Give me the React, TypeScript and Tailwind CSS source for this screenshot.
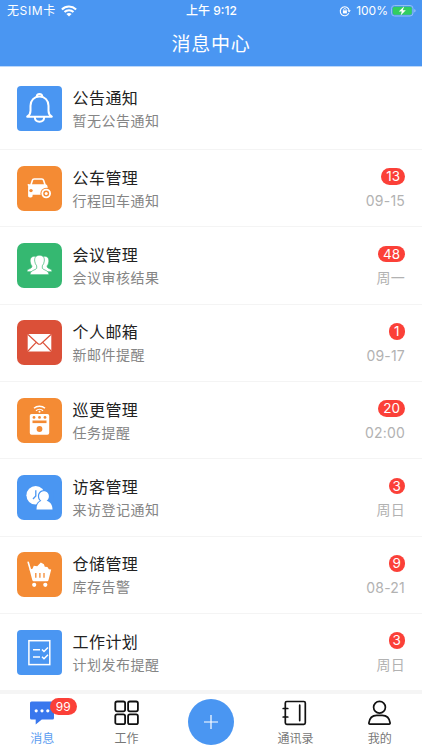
import { ReactNode } from 'react'

type IconName = 'bell' | 'car' | 'people' | 'mail' | 'patrol' | 'visitor' | 'cart' | 'plan'

interface Message {
  title: string
  subtitle: string
  icon: IconName
  color: string
  badge?: string
  time?: string
}

const MESSAGES: Message[] = [
  { title: '公告通知', subtitle: '暂无公告通知', icon: 'bell', color: 'bg-[#4a96f2] rounded-[4px]' },
  { title: '公车管理', subtitle: '行程回车通知', icon: 'car', color: 'bg-[#f48b34] rounded-[7px]', badge: '13', time: '09-15' },
  { title: '会议管理', subtitle: '会议审核结果', icon: 'people', color: 'bg-[#35b871] rounded-[7px]', badge: '48', time: '周一' },
  { title: '个人邮箱', subtitle: '新邮件提醒', icon: 'mail', color: 'bg-[#db5038] rounded-[7px]', badge: '1', time: '09-17' },
  { title: '巡更管理', subtitle: '任务提醒', icon: 'patrol', color: 'bg-[#f48b34] rounded-[7px]', badge: '20', time: '02:00' },
  { title: '访客管理', subtitle: '来访登记通知', icon: 'visitor', color: 'bg-[#4a96f2] rounded-[7px]', badge: '3', time: '周日' },
  { title: '仓储管理', subtitle: '库存告警', icon: 'cart', color: 'bg-[#f48b34] rounded-[7px]', badge: '9', time: '08-21' },
  { title: '工作计划', subtitle: '计划发布提醒', icon: 'plan', color: 'bg-[#4a96f2] rounded-[4px]', badge: '3', time: '周日' },
]

// Every glyph is drawn on the 45px tile
const GLYPHS: Record<IconName, ReactNode> = {
  bell: (
    <g fill="none" stroke="#fff" strokeWidth="2" strokeLinejoin="round" strokeLinecap="round">
      <path d="M10.2 30.7c2.4-1.6 3.3-3.4 3.3-6v-5c0-5.2 3.7-9.2 9-9.2s9 4 9 9.2v5c0 2.6.9 4.4 3.3 6z" />
      <path d="M19.8 10.6c0-3.4 5.4-3.4 5.4 0" />
      <path d="M17.8 31.2c.3 6 9.1 6 9.4 0" />
    </g>
  ),
  car: (
    <g>
      <path
        d="M13.3 18.3l1.3-4c.4-1.3 1.2-2 2.7-2h7.4c1.5 0 2.3.7 2.7 2l1.3 4c1.3.5 1.9 1.5 1.9 2.9v7.6h-15v1c0 1.2-.7 1.7-1.7 1.7h-1c-1.2 0-1.8-.5-1.8-1.7v-7.6c0-1.6.2-2.4-.2-2.7-.7-.6-.3-1.5.6-1.4.6 0 1.1.4 1.8.2z"
        fill="#fff"
      />
      <path d="M15 18.3l1.1-3.5c.2-.8.7-1.1 1.5-1.1h6.8c.8 0 1.3.3 1.5 1.1l1.1 3.5z" fill="#f48b34" />
      <circle cx="14" cy="24.6" r="1.7" fill="#f48b34" />
      <circle cx="29.2" cy="27.5" r="5.8" fill="#f48b34" />
      <circle cx="29.2" cy="27.5" r="3.9" fill="none" stroke="#fff" strokeWidth="1.8" />
      <circle cx="29.2" cy="27.5" r="1.5" fill="#fff" />
    </g>
  ),
  people: (
    <g fill="#fff" stroke="#35b871" strokeWidth=".7">
      <path d="M17.6 13.3c-3.6 0-4.7 2.3-4.4 5.6.2 1.8.8 3 1.7 4 .2 1.5-.9 2.2-2.5 2.9-1.7.7-2.4 1.2-2.4 3h14V15z" />
      <path d="M27.4 13.3c3.6 0 4.7 2.3 4.4 5.6-.2 1.8-.8 3-1.7 4-.2 1.5.9 2.2 2.5 2.9 1.7.7 2.4 1.2 2.4 3h-14V15z" />
      <path d="M22.5 12.3c-3.7 0-5.2 2.3-4.8 5.8.2 2 1 3.6 2 4.7v2.5c-1.6 2.1-6.6 1.9-6.6 6.4h18.8c0-4.5-5-4.3-6.6-6.4v-2.5c1-1.1 1.8-2.7 2-4.7.4-3.5-1.1-5.8-4.8-5.8z" />
    </g>
  ),
  mail: (
    <g>
      <rect x="10.7" y="14" width="23.6" height="17.4" rx="1" fill="#fff" />
      <path d="M11 14.5l9.7 9q1.8 1.5 3.6 0l9.7-9M11 31l8.2-8.7M34 31l-8.2-8.7" fill="none" stroke="#db5038" strokeWidth="1.2" />
    </g>
  ),
  patrol: (
    <g>
      <path d="M17 10.3c2.9-2.7 8.1-2.7 11 0M19 12.7c2-1.8 5-1.8 7 0" fill="none" stroke="#fff" strokeWidth="1.4" />
      <circle cx="22.5" cy="13.8" r="1" fill="#fff" />
      <rect x="12.8" y="15.9" width="19.4" height="20.8" rx="1.8" fill="#fff" />
      <g fill="#f48b34">
        <circle cx="17" cy="19.4" r="1.4" />
        <circle cx="22.5" cy="19.4" r="1.4" />
        <circle cx="28" cy="19.4" r="1.4" />
        <rect x="15.5" y="22.5" width="14" height="2.6" />
        <circle cx="22.5" cy="31" r="2.9" />
      </g>
    </g>
  ),
  visitor: (
    <g>
      <circle cx="18.7" cy="20.3" r="9.3" fill="#fff" />
      <path d="M18.8 15.2V21l-2.8 3" fill="none" stroke="#4a96f2" strokeWidth="1.3" />
      <path d="M27 15c-3.6 0-6.1 2.8-6.1 6.2 0 2 .8 3.5 1.9 4.5-2.8 1.3-4.5 4.4-4.5 9.3h17.8V15z" fill="#4a96f2" />
      <path d="M27 16.2c-2.9 0-4.9 2.2-4.9 5 0 2.2 1 3.7 2.3 4.6-3.2 1.1-4.9 4-4.9 8.6h16c0-4.6-2.2-7.5-5.9-8.6 1.3-.9 2.3-2.4 2.3-4.6 0-2.8-2-5-4.9-5z" fill="#fff" />
    </g>
  ),
  cart: (
    <g>
      <path d="M11.2 10.2l2.2 7.6" fill="none" stroke="#fff" strokeWidth="1.6" strokeLinecap="round" />
      <path
        d="M12.5 17.4l3-.6 1.3-3.1 3.4.6 3.6-3.8 3.1 1.8.9 2.5 2.6.3 1.5 2.1 2.3.4-2.6 10.2c-.3 1.1-.8 1.5-2 1.5H17.3c-1.2 0-1.8-.5-2.1-1.6z"
        fill="#fff"
      />
      <path d="M18.8 21v4.8M22.9 21v4.8M27 21v4.8" stroke="#f48b34" strokeWidth="1.3" />
      <circle cx="17.2" cy="32.8" r="2.1" fill="#fff" />
      <circle cx="28.3" cy="32.8" r="2.1" fill="#fff" />
    </g>
  ),
  plan: (
    <g fill="none" stroke="#fff" strokeWidth="1.5">
      <rect x="11.9" y="10.7" width="20.9" height="23.9" />
      <path d="M16 19.8h7M16 27.1h7M25 19.5l2 2 4-4M25 26.8l2 2 4-4" />
    </g>
  ),
}

function StatusBar() {
  return (
    <div className="grid h-[22px] grid-cols-3 items-center pr-1.5 pl-[7px] text-[12px] leading-none text-white">
      <div className="flex items-center gap-[5px]">
        <span className="tracking-[0.6px]">无SIM卡</span>
        <svg width="16" height="12" viewBox="0 0 16 12">
          <path d="M.9 4.4c4-3.8 10.2-3.8 14.2 0M3.5 7.1c2.5-2.4 6.5-2.4 9 0" fill="none" stroke="#fff" strokeWidth="2.1" />
          <path d="M5.4 8.9c1.4-1.3 3.8-1.3 5.2 0L8 11.5z" fill="#fff" />
        </svg>
      </div>
      <div className="text-center text-[12px] font-medium">上午 9:12</div>
      <div className="flex items-center justify-end">
        <svg className="mr-[5px]" width="12" height="12" viewBox="0 0 12 12" fill="none" stroke="#fff">
          <path d="M9.8 8.3A4.5 4.5 0 1 1 10.2 5.5" strokeWidth="1.1" />
          <path d="M8.4 5.2h3.4L10.1 7.6z" fill="#fff" stroke="none" />
          <rect x="3.9" y="5.4" width="4" height="3" fill="#fff" stroke="none" />
          <path d="M4.6 5.5V4.7c0-1.6 2.6-1.6 2.6 0v.8" strokeWidth=".8" />
        </svg>
        <span>100%</span>
        <svg className="ml-[3px]" width="25" height="12" viewBox="0 0 25 12">
          <rect x=".5" y=".5" width="21.5" height="10.5" rx="3" fill="none" stroke="#92bff7" />
          <rect x="1.7" y="1.7" width="19.1" height="8.1" rx="1.8" fill="#32ce60" />
          <path d="M23.4 4v3.6c1.5-.6 1.5-3 0-3.6z" fill="#a9cdf8" />
          <path d="M13.2 1.2L7.8 6.4h3l-1.2 4.2 5.2-5.4h-3z" fill="#fff" />
        </svg>
      </div>
    </div>
  )
}

function Badge({ count }: { count: string }) {
  return (
    <span
      className={`mt-1 flex h-[16.5px] items-center justify-center rounded-full bg-[#fb4038] pt-px text-[13.5px] leading-none text-white ${
        count.length > 1 ? 'px-[5px]' : 'w-[16.5px]'
      }`}
    >
      {count}
    </span>
  )
}

function MessageRow({ message }: { message: Message }) {
  return (
    <li className="flex h-[77.35px] items-center border-b border-[#f4f4f4] pr-[17px] pl-[16.5px] first:h-[83px]">
      <div className={`size-[45px] shrink-0 ${message.color}`}>
        <svg width="45" height="45" viewBox="0 0 45 45">{GLYPHS[message.icon]}</svg>
      </div>
      <div className="ml-[11px] flex-1 pt-px">
        <p className="text-[16px] leading-6 tracking-[0.45px] text-[#222]">{message.title}</p>
        <p className="text-[14px] leading-[22px] tracking-[0.5px] text-[#858585]">{message.subtitle}</p>
      </div>
      {message.badge && (
        <div className="flex flex-col items-end">
          <Badge count={message.badge} />
          <span className="mt-[5px] text-[14px] leading-[22px] tracking-[0.2px] text-[#b2b2b2]">{message.time}</span>
        </div>
      )}
    </li>
  )
}

function TabItem({ label, active, children }: { label: string; active?: boolean; children: ReactNode }) {
  return (
    <div className="flex flex-1 flex-col items-center pt-1.5">
      <div className="relative h-[26px]">{children}</div>
      <span className={`mt-1 text-[12px] leading-[18px] ${active ? 'text-[#5a9cf0]' : 'text-[#777]'}`}>{label}</span>
    </div>
  )
}

function TabBar() {
  return (
    <nav className="flex h-[56px] bg-white">
      <TabItem label="消息" active>
        <svg width="26" height="26" viewBox="0 0 26 26">
          <path d="M2.5 1.5h21A1.5 1.5 0 0 1 25 3v15a1.5 1.5 0 0 1-1.5 1.5H12.8l-6.1 5v-5H2.5A1.5 1.5 0 0 1 1 18V3a1.5 1.5 0 0 1 1.5-1.5z" fill="#3977ed" />
          <g fill="#fff">
            <circle cx="7.2" cy="10.8" r="1.6" />
            <circle cx="13" cy="10.8" r="1.6" />
            <circle cx="18.8" cy="10.8" r="1.6" />
          </g>
        </svg>
        <span className="absolute -top-[2.5px] left-[20.5px] flex h-[17px] w-[27px] items-center justify-center rounded-full bg-[#fb4038] pt-px text-[12px] leading-none text-white">
          99
        </span>
      </TabItem>
      <TabItem label="工作">
        <svg width="26" height="26" viewBox="0 0 26 26" fill="none" stroke="#111" strokeWidth="1.8">
          <rect x="1.3" y="1.5" width="9.8" height="9.8" rx="1.8" />
          <rect x="14.1" y="1.5" width="9.8" height="9.8" rx="1.8" />
          <rect x="1.3" y="14.4" width="9.8" height="9.8" rx="1.8" />
          <rect x="14.1" y="14.4" width="9.8" height="9.8" rx="1.8" />
        </svg>
      </TabItem>
      <div className="flex flex-1 justify-center pt-[4.5px]">
        <div className="flex size-[46px] items-center justify-center rounded-full bg-[#4a96f2]">
          <svg width="16" height="16" viewBox="0 0 16 16" stroke="#fff" strokeWidth="1.2">
            <path d="M8 1v14M1 8h14" />
          </svg>
        </div>
      </div>
      <TabItem label="通讯录">
        <svg width="26" height="26" viewBox="0 0 26 26" fill="none" stroke="#111" strokeWidth="1.7" strokeLinecap="round">
          <rect x="3.3" y="1.5" width="20" height="22.8" rx="1.5" />
          <path d="M17.7 5.2v15.4M1.2 8.5h4.6M1.2 17h4.6" />
        </svg>
      </TabItem>
      <TabItem label="我的">
        <svg width="26" height="26" viewBox="0 0 26 26" fill="none" stroke="#111" strokeWidth="1.7">
          <circle cx="12.5" cy="7.2" r="5.9" />
          <path d="M2.9 24.2c-.8 0-1.1-.6-1-1.3.6-4.7 3.5-7.6 7.9-7.6h5.4c4.4 0 7.3 2.9 7.9 7.6.1.7-.2 1.3-1 1.3z" />
        </svg>
      </TabItem>
    </nav>
  )
}

export default function App() {
  return (
    <div className="flex h-[750px] w-[422px] flex-col overflow-hidden bg-white font-[Inter,'Noto_Sans_CJK_SC',sans-serif]">
      <header className="h-[67px] shrink-0 border-b border-[#bcd8fa] bg-[#4a96f2]">
        <StatusBar />
        <h1 className="text-center text-[19px] leading-[45px] tracking-[0.7px] text-white">消息中心</h1>
      </header>
      <ul className="h-[623px] shrink-0 overflow-hidden">
        {MESSAGES.map((message) => (
          <MessageRow key={message.title} message={message} />
        ))}
      </ul>
      <div className="h-1 shrink-0 bg-[#f5f5f5]" />
      <TabBar />
    </div>
  )
}
